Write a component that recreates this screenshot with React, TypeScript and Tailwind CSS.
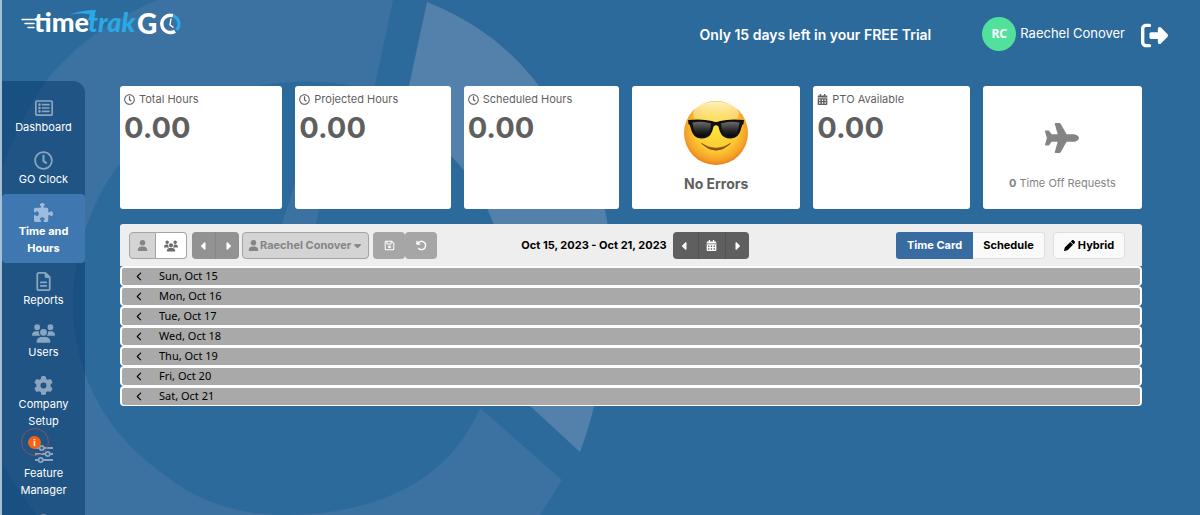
import type { ReactNode } from "react";
import { FaRegListAlt, FaRegClock, FaCalendarAlt } from "react-icons/fa";
import {
  FaPuzzlePiece,
  FaRegFileLines,
  FaUsers,
  FaGear,
  FaUser,
  FaCaretLeft,
  FaCaretRight,
  FaCaretDown,
  FaRegFloppyDisk,
  FaArrowRotateLeft,
  FaPen,
  FaPlane,
  FaChevronLeft,
  FaRightFromBracket,
} from "react-icons/fa6";

function Backdrop() {
  return (
    <svg
      aria-hidden="true"
      viewBox="0 0 1200 515"
      preserveAspectRatio="xMinYMin slice"
      className="absolute inset-0 -z-10 h-full w-full"
    >
      <path
        fill="#3b72a1"
        d="M155 0H391L372 90C345 83 315 81 290 82C215 86 155 118 119 162C80 212 62 285 75 345C90 415 130 455 184 490C215 508 250 515 287 515H0V463C-40 340 -30 190 43 82C72 46 108 20 155 0Z"
      />
      <path fill="#2d6a9c" d="M0 463C6 473 13 484 20 493L34 515H0Z" />
      <path fill="#3b72a1" d="M478 408L560 480L538 515H287C375 514 448 480 478 408Z" />
      <path
        fill="#5381ab"
        d="M425 2C475 22 510 50 537 86C575 130 596 170 605 220C612 300 605 380 578 452L527 405C529 340 515 275 490 220C480 195 468 175 450 157L400 120L407 86Z"
      />
      <path fill="#3b72a1" d="M280 224L294 180L318 90H345L314 224Z" />
    </svg>
  );
}

function Logo() {
  return (
    <svg
      role="img"
      aria-label="timetrakGO"
      viewBox="0 0 162 32"
      className="h-8 w-[162px] overflow-visible"
      fontFamily="Lato, sans-serif"
      fontWeight="900"
    >
      <g stroke="#fff" strokeWidth="1.5" strokeLinecap="round">
        <path d="M1 11.5H13" />
        <path d="M4 15.5H13" />
        <path d="M7 19.5H13" />
      </g>
      <path d="M48 7Q60 2 75 2L72 12H67L69 6.500Q60 4.500 48 7Z" fill="#29a9e5" />
      <text x="13" y="24" fontSize="27" fill="#fff">
        time
      </text>
      <text x="67" y="24" fontSize="27" fontStyle="italic" fill="#29a9e5">
        trak
      </text>
      <text x="116" y="26" fontSize="28" fill="#fff">
        G
      </text>
      <path d="M154 23.200A8.600 8.600 0 1 1 152 7.700" fill="none" stroke="#fff" strokeWidth="3.400" />
      <path d="M152.500 8A8.600 8.600 0 0 1 155.500 22" fill="none" stroke="#29a9e5" strokeWidth="3.200" />
      <path d="M150 10.500L149 17L152.500 19.500" fill="none" stroke="#fff" strokeWidth="1.400" />
    </svg>
  );
}

function SlidersIcon() {
  return (
    <svg viewBox="0 0 20 18" className="h-[18px] w-5" fill="none" stroke="currentColor" strokeWidth="1.800" aria-hidden="true">
      <path d="M1 3H5.500M10 3H19M1 9H11.500M16 9H19M1 15H4.500M9 15H19" />
      <circle cx="7.700" cy="3" r="2.100" />
      <circle cx="13.700" cy="9" r="2.100" />
      <circle cx="6.700" cy="15" r="2.100" />
    </svg>
  );
}

function CoolFace() {
  return (
    <svg viewBox="0 0 66 66" className="size-[66px]" role="img" aria-label="Smiling face with sunglasses">
      <defs>
        <radialGradient id="skin" cx="0.5" cy="0.45" r="0.56">
          <stop offset="0" stopColor="#fde33c" />
          <stop offset="0.6" stopColor="#fbc832" />
          <stop offset="0.86" stopColor="#f5a027" />
          <stop offset="1" stopColor="#e5791c" />
        </radialGradient>
        <linearGradient id="shine" x1="0" y1="0" x2="0" y2="1">
          <stop offset="0" stopColor="#fff6c8" stopOpacity="0.95" />
          <stop offset="1" stopColor="#fff0a0" stopOpacity="0.1" />
        </linearGradient>
        <linearGradient id="lens" x1="0" y1="0" x2="0" y2="1">
          <stop offset="0" stopColor="#6d6d6d" />
          <stop offset="0.55" stopColor="#2c2c2c" />
          <stop offset="1" stopColor="#050505" />
        </linearGradient>
      </defs>
      <circle cx="33" cy="33" r="32" fill="url(#skin)" />
      <ellipse cx="33" cy="14" rx="23" ry="12.500" fill="url(#shine)" />
      <path d="M5 20Q19 18.500 29 21Q33 23 37 21Q47 18.500 61 20L60.500 24Q59 24.500 58.500 27C57 34 54 38.500 47 38.500C39.500 38.500 37 33.500 35.500 26.500Q33 24 30.500 26.500C29 33.500 26.500 38.500 19 38.500C12 38.500 9 34 7.500 27Q7 24.500 5.500 24Z" fill="#111" />
      <path d="M9.500 22.500Q19 20.500 28 23.500C27.500 31 25 36.500 19 36.500C12.500 36.500 10.500 31 9.500 22.500Z" fill="url(#lens)" />
      <path d="M56.500 22.500Q47 20.500 38 23.500C38.500 31 41 36.500 47 36.500C53.500 36.500 55.500 31 56.500 22.500Z" fill="url(#lens)" />
      <path d="M18.500 43.500Q33 53 47.500 43.500Q33 57 18.500 43.500Z" fill="#8a4a12" stroke="#8a4a12" strokeWidth="0.700" strokeLinejoin="round" />
    </svg>
  );
}

type NavItem = { label?: ReactNode; icon: ReactNode; active?: boolean; badge?: boolean };

const navItems: NavItem[] = [
  { label: "Dashboard", icon: <FaRegListAlt className="size-[18px]" /> },
  { label: "GO Clock", icon: <FaRegClock className="size-[19px]" /> },
  { label: <>Time and<br />Hours</>, icon: <FaPuzzlePiece className="size-[19px]" />, active: true },
  { label: "Reports", icon: <FaRegFileLines className="size-[19px]" /> },
  { label: "Users", icon: <FaUsers className="size-[23px]" /> },
  { label: <>Company<br />Setup</>, icon: <FaGear className="size-[19px]" /> },
  { label: <>Feature<br />Manager</>, icon: <SlidersIcon />, badge: true },
  { icon: <FaRegClock className="size-[19px]" /> },
];

function Sidebar() {
  return (
    <nav className="w-[83px] shrink-0 overflow-hidden rounded-tr-xl bg-[#003162]/45 pt-[9px]">
      {navItems.map((item, i) => (
        <a
          key={i}
          href="#"
          className={
            "flex flex-col items-center gap-px pt-2 pb-[6px] text-center text-[11px] leading-[17px] text-white " +
            (item.active ? "rounded-[4px] bg-[#3f78b1] font-bold" : "")
          }
        >
          <span className={"relative flex h-5 items-center justify-center " + (item.active ? "text-[#9dbbdc]" : "text-[#8aa5c0]")}>
            {item.icon}
            {item.badge && (
              <span className="absolute -top-4 -left-[13px] flex size-7 items-center justify-center rounded-full border border-[#85535c]">
                <span className="flex size-[13px] items-center justify-center rounded-full bg-[#f9610e] text-[9px] font-bold text-white">
                  i
                </span>
              </span>
            )}
          </span>
          {item.label && <span>{item.label}</span>}
        </a>
      ))}
    </nav>
  );
}

function HoursCard({ title, icon }: { title: string; icon: ReactNode }) {
  return (
    <section className="rounded-[3px] bg-white px-1 pt-[5px] text-[#5f5f5f]">
      <h2 className="flex items-center gap-1 text-[11px] leading-4">
        {icon}
        {title}
      </h2>
      <p className="pt-1 text-[29px] leading-[34px] font-bold">0.00</p>
    </section>
  );
}

const days = ["Sun, Oct 15", "Mon, Oct 16", "Tue, Oct 17", "Wed, Oct 18", "Thu, Oct 19", "Fri, Oct 20", "Sat, Oct 21"];

function Toolbar() {
  return (
    <div className="grid grid-cols-[1fr_auto_1fr] items-center rounded-t-[3px] bg-[#eeeeee] pt-2 pr-[17px] pb-[7px] pl-[9px] text-[11px] font-bold text-black">
      <div className="flex h-[27px] items-stretch">
        <button aria-label="Single user" className="flex w-[27px] items-center justify-center rounded-l-[4px] border border-[#a3a3a3] bg-[#d4d4d4] text-[#858585]">
          <FaUser className="size-[11px]" />
        </button>
        <button aria-label="All users" className="flex w-[31px] items-center justify-center rounded-r-[4px] border border-l-0 border-[#a3a3a3] bg-white text-[#6c6c6c]">
          <FaUsers className="size-[14px]" />
        </button>
        <button aria-label="Previous user" className="ml-[5px] flex w-[23px] items-center justify-center rounded-l-[4px] bg-[#929292] text-white">
          <FaCaretLeft className="size-3" />
        </button>
        <button aria-label="Next user" className="flex w-6 items-center justify-center rounded-r-[4px] border-l border-[#868686] bg-[#929292] text-white">
          <FaCaretRight className="size-3" />
        </button>
        <label className="ml-[3px] flex w-[127px] items-center justify-center rounded-[4px] border border-[#a3a3a3] bg-[#d4d4d4] text-[#858585]">
          <FaUser className="size-[11px] shrink-0" />
          <select aria-label="Employee" className="appearance-none pl-px">
            <option>Raechel Conover</option>
          </select>
          <FaCaretDown className="size-[11px] shrink-0" />
        </label>
        <button aria-label="Save" className="ml-1 flex w-8 items-center justify-center rounded-[4px] bg-[#a6a6a6] text-white">
          <FaRegFloppyDisk className="size-[11px]" />
        </button>
        <button aria-label="Undo" className="flex w-8 items-center justify-center rounded-[4px] bg-[#a6a6a6] text-white">
          <FaArrowRotateLeft className="size-[11px]" />
        </button>
      </div>
      <div className="flex h-[27px] items-stretch pl-4">
        <span className="self-center pr-[6px]">Oct 15, 2023 - Oct 21, 2023</span>
        <button aria-label="Previous week" className="flex w-[25px] items-center justify-center rounded-l-[4px] bg-[#5f5f5f] text-white">
          <FaCaretLeft className="size-3" />
        </button>
        <button aria-label="Pick a date" className="flex w-7 items-center justify-center border-x border-[#525252] bg-[#5f5f5f] text-white">
          <FaCalendarAlt className="size-[11px]" />
        </button>
        <button aria-label="Next week" className="flex w-[23px] items-center justify-center rounded-r-[4px] bg-[#5f5f5f] text-white">
          <FaCaretRight className="size-3" />
        </button>
      </div>
      <div className="flex h-[27px] items-stretch justify-end">
        <button className="w-[77px] rounded-l-[3px] bg-[#386b9f] text-white">Time Card</button>
        <button className="w-[72px] rounded-r-[3px] border border-l-0 border-[#dedede] bg-[#fafafa]">Schedule</button>
        <button className="ml-2 flex w-[72px] items-center justify-center gap-[3px] rounded-[4px] border border-[#dedede] bg-[#fafafa]">
          <FaPen className="size-[11px]" />
          Hybrid
        </button>
      </div>
    </div>
  );
}

export default function App() {
  return (
    <div className="relative isolate flex h-screen flex-col overflow-hidden border-l-2 border-[#a9c0d4] bg-[#2d6a9c] font-[Inter,sans-serif]">
      <Backdrop />
      <header className="flex h-[81px] shrink-0 items-start justify-between pr-8 pl-[19px]">
        <a href="#" className="pt-2">
          <Logo />
        </a>
        <div className="flex h-[68px] items-center text-white">
          <p className="mr-[51px] pt-[2px] text-sm font-semibold">Only 15 days left in your FREE Trial</p>
          <span className="flex size-[34px] items-center justify-center rounded-full bg-[#51e19d] font-['Noto_Sans',sans-serif] text-xs font-bold">
            RC
          </span>
          <span className="ml-1 text-[13px]">Raechel Conover</span>
          <button aria-label="Log out" className="ml-4 pt-[2px]">
            <FaRightFromBracket className="size-[27px]" />
          </button>
        </div>
      </header>
      <div className="flex min-h-0 flex-1">
        <Sidebar />
        <main className="min-w-0 flex-1 pt-[5px] pr-[58px] pl-[35px]">
          <div className="grid h-[123px] grid-cols-[162fr_155fr_155fr_168fr_156fr_159fr] gap-[13px]">
            <HoursCard title="Total Hours" icon={<FaRegClock className="size-[11px]" />} />
            <HoursCard title="Projected Hours" icon={<FaRegClock className="size-[11px]" />} />
            <HoursCard title="Scheduled Hours" icon={<FaRegClock className="size-[11px]" />} />
            <section className="flex flex-col items-center rounded-[3px] bg-white pt-[14px] text-[#5f5f5f]">
              <CoolFace />
              <p className="pt-2 text-sm font-bold">No Errors</p>
            </section>
            <HoursCard title="PTO Available" icon={<FaCalendarAlt className="size-[11px]" />} />
            <section className="flex flex-col items-center rounded-[3px] bg-white pt-[35px] text-[#848484]">
              <FaPlane className="size-[34px]" />
              <p className="pt-5 text-[11px] leading-4">
                <b>0</b> Time Off Requests
              </p>
            </section>
          </div>
          <div className="mt-[15px]">
            <Toolbar />
            <ul>
              {days.map((day) => (
                <li key={day}>
                  <button className="flex h-5 w-full items-center rounded-[4px] border-2 border-b border-white bg-[#a9a9a9] pl-[13px] text-left font-['Noto_Sans',sans-serif] text-[11px] text-black">
                    <FaChevronLeft className="size-[9px]" />
                    <span className="pl-[15px]">{day}</span>
                  </button>
                </li>
              ))}
            </ul>
          </div>
        </main>
      </div>
    </div>
  );
}
